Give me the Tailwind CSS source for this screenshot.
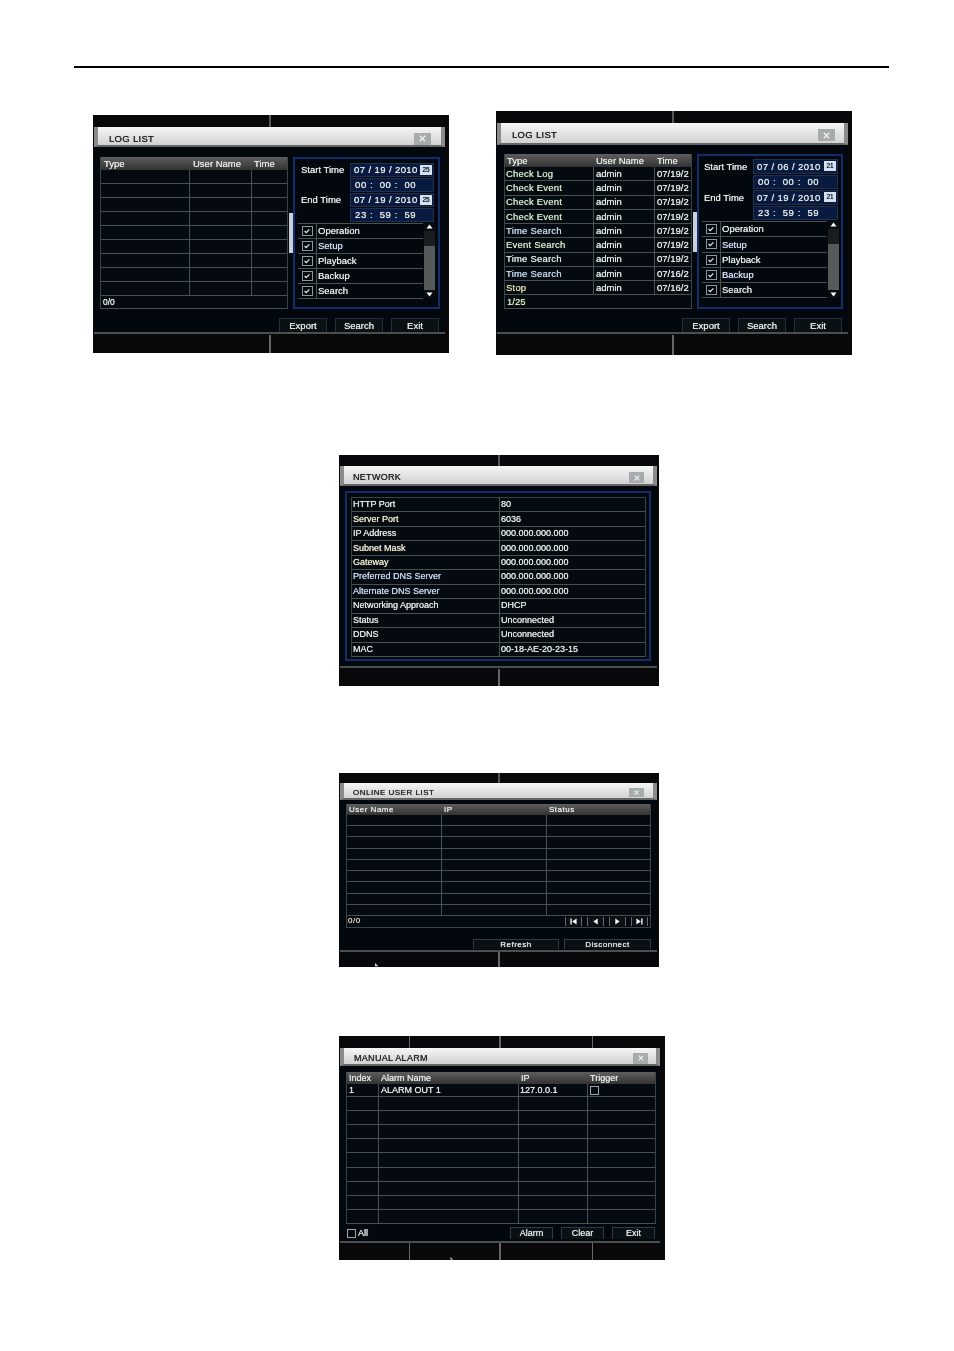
<!DOCTYPE html>
<html>
<head>
<meta charset="utf-8">
<script src="https://cdn.jsdelivr.net/npm/@tailwindcss/browser@4"></script>
</head>
<body class="bg-white">
<div class="w-[954px] h-[1351px] bg-white overflow-hidden font-['Liberation_Sans',Arial,sans-serif] text-[9.5px] leading-none text-[#e4ebe7] [text-shadow:0_0_0.7px_currentColor]">
  <div class="w-[815px] ml-[74px] mt-[66px] h-[2px] bg-black"></div>

  <div class="flex items-start gap-[47px] ml-[93px] mt-[43px] w-[759px] h-[244px]">
    <!-- LOG LIST 1 -->
    <section class="relative w-[356px] h-[238px] mt-[4px] bg-[#08080a] pt-[12px] pl-[1px] blur-[0.35px]">
      <i class="absolute left-[176px] top-0 h-[12px] w-[2px] bg-[#555]"></i>
      <i class="absolute left-[176px] bottom-0 h-[18px] w-[2px] bg-[#666]"></i>
      <div class="w-[351px] h-[207px] border-b-2 border-[#4a5050] bg-[#03080e]">
        <header class="flex items-center justify-between h-[20px] pl-[11px] pr-[10px] pt-[5px] bg-linear-to-b from-[#f6f6f6] to-[#d2d2d2] border-x-4 border-b-2 border-x-[#8a8a8a] border-b-[#666] text-[#222] tracking-[0.3px]">
          <span>LOG LIST</span>
          <span class="flex items-center justify-center w-[17px] h-[12px] bg-[#a6abab]"><svg viewBox="0 0 10 10" class="w-[9px] h-[9px]"><path d="M2 2l6 6M8 2l-6 6" fill="none" stroke="#eee" stroke-width="1.6"/></svg></span>
        </header>
        <div class="flex pl-[6px] pt-[10px]">
          <div class="flex flex-col w-[188px] h-[152px] border-x border-[#3a4643] bg-[#040a10]">
            <div class="flex h-[13px] shrink-0 items-center bg-linear-to-b from-[#5e5e5e] to-[#333]">
              <span class="w-[89px] pl-[3px]">Type</span><span class="w-[62px] pl-[3px]">User Name</span><span class="pl-[2px]">Time</span>
            </div>
            <div class="flex h-[14px] border-b border-[#46524f]"><i class="w-[89px] border-r border-[#46524f]"></i><i class="w-[62px] border-r border-[#46524f]"></i></div>
            <div class="flex h-[14px] border-b border-[#46524f]"><i class="w-[89px] border-r border-[#46524f]"></i><i class="w-[62px] border-r border-[#46524f]"></i></div>
            <div class="flex h-[14px] border-b border-[#46524f]"><i class="w-[89px] border-r border-[#46524f]"></i><i class="w-[62px] border-r border-[#46524f]"></i></div>
            <div class="flex h-[14px] border-b border-[#46524f]"><i class="w-[89px] border-r border-[#46524f]"></i><i class="w-[62px] border-r border-[#46524f]"></i></div>
            <div class="flex h-[14px] border-b border-[#46524f]"><i class="w-[89px] border-r border-[#46524f]"></i><i class="w-[62px] border-r border-[#46524f]"></i></div>
            <div class="flex h-[14px] border-b border-[#46524f]"><i class="w-[89px] border-r border-[#46524f]"></i><i class="w-[62px] border-r border-[#46524f]"></i></div>
            <div class="flex h-[14px] border-b border-[#46524f]"><i class="w-[89px] border-r border-[#46524f]"></i><i class="w-[62px] border-r border-[#46524f]"></i></div>
            <div class="flex h-[14px] border-b border-[#46524f]"><i class="w-[89px] border-r border-[#46524f]"></i><i class="w-[62px] border-r border-[#46524f]"></i></div>
            <div class="flex h-[14px] border-b border-[#46524f]"><i class="w-[89px] border-r border-[#46524f]"></i><i class="w-[62px] border-r border-[#46524f]"></i></div>
            <div class="flex flex-1 items-center pl-[2px] border-b border-[#46524f] text-[8.5px]">0/0</div>
          </div>
          <div class="flex items-center justify-end w-[5px] h-[152px]"><i class="w-[4px] h-[40px] bg-[#c9d2d8]"></i></div>
          <div class="w-[147px] h-[152px] border-2 border-[#142c6a] pl-[3px] pt-[4px] bg-[#03080e]">
            <div class="grid grid-cols-[52px_84px] grid-rows-[14px_14px_14px_14px] gap-y-[1px]">
              <span class="self-center pl-[3px]">Start Time</span>
              <div class="flex items-center justify-between pl-[3px] pr-[1px] border border-[#20314f] bg-[#091a40] tracking-[0.4px] whitespace-nowrap">07 / 19 / 2010<span class="flex items-center justify-center w-[12px] h-[10px] bg-[#d5e3f0] text-[#123] text-[6.5px] tracking-normal">25</span></div>
              <span></span>
              <div class="flex items-center pl-[4px] border border-[#20314f] bg-[#091a40] tracking-[0.6px] whitespace-nowrap">00 :&nbsp; 00 :&nbsp; 00</div>
              <span class="self-center pl-[3px]">End Time</span>
              <div class="flex items-center justify-between pl-[3px] pr-[1px] border border-[#20314f] bg-[#091a40] tracking-[0.4px] whitespace-nowrap">07 / 19 / 2010<span class="flex items-center justify-center w-[12px] h-[10px] bg-[#d5e3f0] text-[#123] text-[6.5px] tracking-normal">25</span></div>
              <span></span>
              <div class="flex items-center pl-[4px] border border-[#20314f] bg-[#091a40] tracking-[0.6px] whitespace-nowrap">23 :&nbsp; 59 :&nbsp; 59</div>
            </div>
            <div class="flex gap-[1px] mt-[1px]">
              <div class="w-[125px] h-[75px] border-t border-[#46524f]">
                <div class="flex items-center h-[15px] border-b border-[#46524f]"><span class="flex items-center justify-center w-[19px] h-full border-r border-[#46524f]"><span class="flex items-center justify-center w-[11px] h-[10px] border border-[#8a9a9a]"><svg viewBox="0 0 10 10" class="w-[8px] h-[8px]"><path d="M2 5l2 2 4-4" fill="none" stroke="#eee" stroke-width="1.500"/></svg></span></span><span class="pl-[1px]">Operation</span></div>
                <div class="flex items-center h-[15px] border-b border-[#46524f]"><span class="flex items-center justify-center w-[19px] h-full border-r border-[#46524f]"><span class="flex items-center justify-center w-[11px] h-[10px] border border-[#8a9a9a]"><svg viewBox="0 0 10 10" class="w-[8px] h-[8px]"><path d="M2 5l2 2 4-4" fill="none" stroke="#eee" stroke-width="1.500"/></svg></span></span><span class="pl-[1px] text-[#d4def5]">Setup</span></div>
                <div class="flex items-center h-[15px] border-b border-[#46524f]"><span class="flex items-center justify-center w-[19px] h-full border-r border-[#46524f]"><span class="flex items-center justify-center w-[11px] h-[10px] border border-[#8a9a9a]"><svg viewBox="0 0 10 10" class="w-[8px] h-[8px]"><path d="M2 5l2 2 4-4" fill="none" stroke="#eee" stroke-width="1.500"/></svg></span></span><span class="pl-[1px]">Playback</span></div>
                <div class="flex items-center h-[15px] border-b border-[#46524f]"><span class="flex items-center justify-center w-[19px] h-full border-r border-[#46524f]"><span class="flex items-center justify-center w-[11px] h-[10px] border border-[#8a9a9a]"><svg viewBox="0 0 10 10" class="w-[8px] h-[8px]"><path d="M2 5l2 2 4-4" fill="none" stroke="#eee" stroke-width="1.500"/></svg></span></span><span class="pl-[1px]">Backup</span></div>
                <div class="flex items-center h-[15px] border-b border-[#46524f]"><span class="flex items-center justify-center w-[19px] h-full border-r border-[#46524f]"><span class="flex items-center justify-center w-[11px] h-[10px] border border-[#8a9a9a]"><svg viewBox="0 0 10 10" class="w-[8px] h-[8px]"><path d="M2 5l2 2 4-4" fill="none" stroke="#eee" stroke-width="1.500"/></svg></span></span><span class="pl-[1px]">Search</span></div>
              </div>
              <div class="flex flex-col w-[11px] h-[75px] bg-[#555a5a]">
                <svg viewBox="0 0 11 8" class="w-[11px] h-[8px] bg-[#0a0d10]"><path d="M5.500 1.500l3 4h-6z" fill="#fff"/></svg>
                <i class="h-[15px] bg-[#1a1d1f]"></i>
                <i class="flex-1"></i>
                <svg viewBox="0 0 11 8" class="w-[11px] h-[8px] bg-[#0a0d10]"><path d="M5.500 6.500l3-4h-6z" fill="#fff"/></svg>
              </div>
            </div>
          </div>
        </div>
        <div class="flex justify-end gap-[8px] mt-[9px] pr-[6px]">
          <span class="flex items-center justify-center w-[48px] h-[14px] border-t border-x border-[#243038] bg-[#0b1014]">Export</span>
          <span class="flex items-center justify-center w-[48px] h-[14px] border-t border-x border-[#243038] bg-[#0b1014]">Search</span>
          <span class="flex items-center justify-center w-[48px] h-[14px] border-t border-x border-[#243038] bg-[#0b1014]">Exit</span>
        </div>
      </div>
    </section>

    <!-- LOG LIST 2 -->
    <section class="relative w-[356px] h-[244px] bg-[#08080a] pt-[12px] pl-[1px] blur-[0.35px]">
      <i class="absolute left-[176px] top-0 h-[12px] w-[2px] bg-[#555]"></i>
      <i class="absolute left-[176px] bottom-0 h-[20px] w-[2px] bg-[#666]"></i>
      <div class="w-[351px] h-[211px] border-b-2 border-[#4a5050] bg-[#03080e]">
        <header class="flex items-center justify-between h-[22px] pl-[11px] pr-[9px] pt-[4px] bg-linear-to-b from-[#f6f6f6] to-[#d2d2d2] border-x-4 border-b-2 border-x-[#8a8a8a] border-b-[#666] text-[#222] tracking-[0.3px]">
          <span>LOG LIST</span>
          <span class="flex items-center justify-center w-[17px] h-[12px] bg-[#a6abab]"><svg viewBox="0 0 10 10" class="w-[9px] h-[9px]"><path d="M2 2l6 6M8 2l-6 6" fill="none" stroke="#eee" stroke-width="1.6"/></svg></span>
        </header>
        <div class="flex pl-[7px] pt-[9px]">
          <div class="flex flex-col w-[188px] h-[155px] border-x border-[#3a4643] bg-[#040a10]">
            <div class="flex h-[13px] shrink-0 items-center bg-linear-to-b from-[#5e5e5e] to-[#333]">
              <span class="w-[89px] pl-[2px]">Type</span><span class="w-[61px] pl-[2px]">User Name</span><span class="pl-[2px]">Time</span>
            </div>
            <div class="flex h-[14.250px] items-center border-b border-[#46524f]"><span class="flex items-center w-[89px] h-full pl-[1px] border-r border-[#46524f] text-[#cfe6c8] tracking-[0.2px]">Check Log</span><span class="flex items-center w-[61px] h-full pl-[2px] border-r border-[#46524f]">admin</span><span class="pl-[2px]">07/19/2</span></div>
            <div class="flex h-[14.250px] items-center border-b border-[#46524f]"><span class="flex items-center w-[89px] h-full pl-[1px] border-r border-[#46524f] text-[#cfe6c8] tracking-[0.2px]">Check Event</span><span class="flex items-center w-[61px] h-full pl-[2px] border-r border-[#46524f]">admin</span><span class="pl-[2px]">07/19/2</span></div>
            <div class="flex h-[14.250px] items-center border-b border-[#46524f]"><span class="flex items-center w-[89px] h-full pl-[1px] border-r border-[#46524f] text-[#cfe6c8] tracking-[0.2px]">Check Event</span><span class="flex items-center w-[61px] h-full pl-[2px] border-r border-[#46524f]">admin</span><span class="pl-[2px]">07/19/2</span></div>
            <div class="flex h-[14.250px] items-center border-b border-[#46524f]"><span class="flex items-center w-[89px] h-full pl-[1px] border-r border-[#46524f] text-[#cfe6c8] tracking-[0.2px]">Check Event</span><span class="flex items-center w-[61px] h-full pl-[2px] border-r border-[#46524f]">admin</span><span class="pl-[2px]">07/19/2</span></div>
            <div class="flex h-[14.250px] items-center border-b border-[#46524f]"><span class="flex items-center w-[89px] h-full pl-[1px] border-r border-[#46524f] text-[#c4d8ea] tracking-[0.2px]">Time Search</span><span class="flex items-center w-[61px] h-full pl-[2px] border-r border-[#46524f]">admin</span><span class="pl-[2px]">07/19/2</span></div>
            <div class="flex h-[14.250px] items-center border-b border-[#46524f]"><span class="flex items-center w-[89px] h-full pl-[1px] border-r border-[#46524f] text-[#cfe6c8] tracking-[0.2px]">Event Search</span><span class="flex items-center w-[61px] h-full pl-[2px] border-r border-[#46524f]">admin</span><span class="pl-[2px]">07/19/2</span></div>
            <div class="flex h-[14.250px] items-center border-b border-[#46524f]"><span class="flex items-center w-[89px] h-full pl-[1px] border-r border-[#46524f] text-[#d8eadf] tracking-[0.2px]">Time Search</span><span class="flex items-center w-[61px] h-full pl-[2px] border-r border-[#46524f]">admin</span><span class="pl-[2px]">07/19/2</span></div>
            <div class="flex h-[14.250px] items-center border-b border-[#46524f]"><span class="flex items-center w-[89px] h-full pl-[1px] border-r border-[#46524f] text-[#c4d8ea] tracking-[0.2px]">Time Search</span><span class="flex items-center w-[61px] h-full pl-[2px] border-r border-[#46524f]">admin</span><span class="pl-[2px]">07/16/2</span></div>
            <div class="flex h-[14.250px] items-center border-b border-[#46524f]"><span class="flex items-center w-[89px] h-full pl-[1px] border-r border-[#46524f] text-[#e2dcae] tracking-[0.2px]">Stop</span><span class="flex items-center w-[61px] h-full pl-[2px] border-r border-[#46524f]">admin</span><span class="pl-[2px]">07/16/2</span></div>
            <div class="flex flex-1 items-center pl-[2px] border-b border-[#46524f] text-[#d8e8c0]">1/25</div>
          </div>
          <div class="flex items-center justify-end w-[5px] h-[155px]"><i class="w-[4px] h-[40px] bg-[#c9d2d8]"></i></div>
          <div class="w-[146px] h-[155px] border-2 border-[#142c6a] pl-[3px] pt-[3px] bg-[#03080e]">
            <div class="grid grid-cols-[51px_85px] grid-rows-[14.500px_14.500px_14.500px_14.500px] gap-y-[1px]">
              <span class="self-center pl-[2px]">Start Time</span>
              <div class="flex items-center justify-between pl-[3px] pr-[1px] border border-[#20314f] bg-[#091a40] tracking-[0.4px] whitespace-nowrap">07 / 06 / 2010<span class="flex items-center justify-center w-[12px] h-[10px] bg-[#d5e3f0] text-[#123] text-[6.5px] tracking-normal">21</span></div>
              <span></span>
              <div class="flex items-center pl-[4px] border border-[#20314f] bg-[#091a40] tracking-[0.6px] whitespace-nowrap">00 :&nbsp; 00 :&nbsp; 00</div>
              <span class="self-center pl-[2px]">End Time</span>
              <div class="flex items-center justify-between pl-[3px] pr-[1px] border border-[#20314f] bg-[#091a40] tracking-[0.4px] whitespace-nowrap">07 / 19 / 2010<span class="flex items-center justify-center w-[12px] h-[10px] bg-[#d5e3f0] text-[#123] text-[6.5px] tracking-normal">21</span></div>
              <span></span>
              <div class="flex items-center pl-[4px] border border-[#20314f] bg-[#091a40] tracking-[0.6px] whitespace-nowrap">23 :&nbsp; 59 :&nbsp; 59</div>
            </div>
            <div class="flex gap-[1px] mt-[1px]">
              <div class="w-[125px] h-[77px] border-t border-[#46524f]">
                <div class="flex items-center h-[15.250px] border-b border-[#46524f]"><span class="flex items-center justify-center w-[19px] h-full border-r border-[#46524f]"><span class="flex items-center justify-center w-[11px] h-[10px] border border-[#8a9a9a]"><svg viewBox="0 0 10 10" class="w-[8px] h-[8px]"><path d="M2 5l2 2 4-4" fill="none" stroke="#eee" stroke-width="1.500"/></svg></span></span><span class="pl-[1px]">Operation</span></div>
                <div class="flex items-center h-[15.250px] border-b border-[#46524f]"><span class="flex items-center justify-center w-[19px] h-full border-r border-[#46524f]"><span class="flex items-center justify-center w-[11px] h-[10px] border border-[#8a9a9a]"><svg viewBox="0 0 10 10" class="w-[8px] h-[8px]"><path d="M2 5l2 2 4-4" fill="none" stroke="#eee" stroke-width="1.500"/></svg></span></span><span class="pl-[1px] text-[#d4def5]">Setup</span></div>
                <div class="flex items-center h-[15.250px] border-b border-[#46524f]"><span class="flex items-center justify-center w-[19px] h-full border-r border-[#46524f]"><span class="flex items-center justify-center w-[11px] h-[10px] border border-[#8a9a9a]"><svg viewBox="0 0 10 10" class="w-[8px] h-[8px]"><path d="M2 5l2 2 4-4" fill="none" stroke="#eee" stroke-width="1.500"/></svg></span></span><span class="pl-[1px]">Playback</span></div>
                <div class="flex items-center h-[15.250px] border-b border-[#46524f]"><span class="flex items-center justify-center w-[19px] h-full border-r border-[#46524f]"><span class="flex items-center justify-center w-[11px] h-[10px] border border-[#8a9a9a]"><svg viewBox="0 0 10 10" class="w-[8px] h-[8px]"><path d="M2 5l2 2 4-4" fill="none" stroke="#eee" stroke-width="1.500"/></svg></span></span><span class="pl-[1px] text-[#d4def5]">Backup</span></div>
                <div class="flex items-center h-[15.250px] border-b border-[#46524f]"><span class="flex items-center justify-center w-[19px] h-full border-r border-[#46524f]"><span class="flex items-center justify-center w-[11px] h-[10px] border border-[#8a9a9a]"><svg viewBox="0 0 10 10" class="w-[8px] h-[8px]"><path d="M2 5l2 2 4-4" fill="none" stroke="#eee" stroke-width="1.500"/></svg></span></span><span class="pl-[1px]">Search</span></div>
              </div>
              <div class="flex flex-col w-[11px] h-[77px] bg-[#555a5a]">
                <svg viewBox="0 0 11 8" class="w-[11px] h-[8px] bg-[#0a0d10]"><path d="M5.500 1.500l3 4h-6z" fill="#fff"/></svg>
                <i class="h-[15px] bg-[#1a1d1f]"></i>
                <i class="flex-1"></i>
                <svg viewBox="0 0 11 8" class="w-[11px] h-[8px] bg-[#0a0d10]"><path d="M5.500 6.500l3-4h-6z" fill="#fff"/></svg>
              </div>
            </div>
          </div>
        </div>
        <div class="flex justify-end gap-[8px] mt-[9px] pr-[6px]">
          <span class="flex items-center justify-center w-[48px] h-[14px] border-t border-x border-[#243038] bg-[#0b1014]">Export</span>
          <span class="flex items-center justify-center w-[48px] h-[14px] border-t border-x border-[#243038] bg-[#0b1014]">Search</span>
          <span class="flex items-center justify-center w-[48px] h-[14px] border-t border-x border-[#243038] bg-[#0b1014]">Exit</span>
        </div>
      </div>
    </section>
  </div>

  <!-- NETWORK -->
  <section class="relative w-[320px] h-[231px] ml-[339px] mt-[100px] bg-[#08080a] pt-[11px] pl-[1px] text-[9px] blur-[0.35px]">
    <i class="absolute left-[159px] top-0 h-[11px] w-[2px] bg-[#555]"></i>
    <i class="absolute left-[159px] bottom-0 h-[17px] w-[2px] bg-[#666]"></i>
    <div class="w-[317px] h-[202px] border-b-2 border-[#4a5050] bg-[#03080e]">
      <header class="flex items-center justify-between h-[20px] pl-[9px] pr-[9px] pt-[5px] bg-linear-to-b from-[#f6f6f6] to-[#d2d2d2] border-x-4 border-b-2 border-x-[#8a8a8a] border-b-[#666] text-[#222] text-[9px] tracking-[0.3px]">
        <span>NETWORK</span>
        <span class="flex items-center justify-center w-[15px] h-[11px] bg-[#a6abab]"><svg viewBox="0 0 10 10" class="w-[8px] h-[8px]"><path d="M2 2l6 6M8 2l-6 6" fill="none" stroke="#eee" stroke-width="1.6"/></svg></span>
      </header>
      <div class="w-[306px] h-[170px] mt-[5px] ml-[5px] border-2 border-[#142c6a] pl-[4px] pt-[4px]">
        <div class="flex flex-col w-[295px] h-[160px] border-t border-x border-[#3a4643] bg-[#040a10]">
          <div class="flex flex-1 items-center border-b border-[#46524f]"><span class="flex items-center w-[148px] h-full pl-[1px] border-r border-[#46524f]">HTTP Port</span><span class="pl-[1px]">80</span></div>
          <div class="flex flex-1 items-center border-b border-[#46524f]"><span class="flex items-center w-[148px] h-full pl-[1px] border-r border-[#46524f] text-[#f0ecd0]">Server Port</span><span class="pl-[1px]">6036</span></div>
          <div class="flex flex-1 items-center border-b border-[#46524f]"><span class="flex items-center w-[148px] h-full pl-[1px] border-r border-[#46524f]">IP Address</span><span class="pl-[1px]">000.000.000.000</span></div>
          <div class="flex flex-1 items-center border-b border-[#46524f]"><span class="flex items-center w-[148px] h-full pl-[1px] border-r border-[#46524f] text-[#f0ecd0]">Subnet Mask</span><span class="pl-[1px]">000.000.000.000</span></div>
          <div class="flex flex-1 items-center border-b border-[#46524f]"><span class="flex items-center w-[148px] h-full pl-[1px] border-r border-[#46524f] text-[#f0ecd0]">Gateway</span><span class="pl-[1px]">000.000.000.000</span></div>
          <div class="flex flex-1 items-center border-b border-[#46524f]"><span class="flex items-center w-[148px] h-full pl-[1px] border-r border-[#46524f] text-[#c8daf0]">Preferred DNS Server</span><span class="pl-[1px]">000.000.000.000</span></div>
          <div class="flex flex-1 items-center border-b border-[#46524f]"><span class="flex items-center w-[148px] h-full pl-[1px] border-r border-[#46524f] text-[#c8daf0]">Alternate DNS Server</span><span class="pl-[1px]">000.000.000.000</span></div>
          <div class="flex flex-1 items-center border-b border-[#46524f]"><span class="flex items-center w-[148px] h-full pl-[1px] border-r border-[#46524f]">Networking Approach</span><span class="pl-[1px]">DHCP</span></div>
          <div class="flex flex-1 items-center border-b border-[#46524f]"><span class="flex items-center w-[148px] h-full pl-[1px] border-r border-[#46524f]">Status</span><span class="pl-[1px]">Unconnected</span></div>
          <div class="flex flex-1 items-center border-b border-[#46524f]"><span class="flex items-center w-[148px] h-full pl-[1px] border-r border-[#46524f]">DDNS</span><span class="pl-[1px]">Unconnected</span></div>
          <div class="flex flex-1 items-center border-b border-[#46524f]"><span class="flex items-center w-[148px] h-full pl-[1px] border-r border-[#46524f]">MAC</span><span class="pl-[1px]">00-18-AE-20-23-15</span></div>
        </div>
      </div>
    </div>
  </section>

  <!-- ONLINE USER LIST -->
  <section class="relative w-[320px] h-[194px] ml-[339px] mt-[87px] bg-[#08080a] pt-[10px] pl-[1px] text-[8px] tracking-[0.5px] blur-[0.35px]">
    <i class="absolute left-[159px] top-0 h-[10px] w-[2px] bg-[#555]"></i>
    <i class="absolute left-[159px] bottom-0 h-[15px] w-[2px] bg-[#666]"></i>
    <svg viewBox="0 0 6 6" class="absolute left-[35px] bottom-0 w-[6px] h-[4px]"><path d="M0 0l5 5H0z" fill="#ddd"/></svg>
    <div class="w-[317px] h-[169px] border-b-2 border-[#4a5050] bg-[#03080e]">
      <header class="flex items-center justify-between h-[17px] pl-[9px] pr-[9px] pt-[4px] bg-linear-to-b from-[#f6f6f6] to-[#d2d2d2] border-x-4 border-b-2 border-x-[#8a8a8a] border-b-[#666] text-[#222]">
        <span>ONLINE USER LIST</span>
        <span class="flex items-center justify-center w-[15px] h-[9px] bg-[#a6abab]"><svg viewBox="0 0 10 10" class="w-[7px] h-[7px]"><path d="M2 2l6 6M8 2l-6 6" fill="none" stroke="#eee" stroke-width="1.6"/></svg></span>
      </header>
      <div class="flex flex-col w-[305px] h-[124px] mt-[4px] ml-[6px] border-x border-b border-[#3a4643] bg-[#040a10]">
        <div class="flex h-[11px] shrink-0 items-center bg-linear-to-b from-[#5e5e5e] to-[#333]"><span class="w-[95px] pl-[2px]">User Name</span><span class="w-[105px] pl-[2px]">IP</span><span class="pl-[2px]">Status</span></div>
        <div class="flex flex-1 border-b border-[#46524f]"><i class="w-[95px] border-r border-[#46524f]"></i><i class="w-[105px] border-r border-[#46524f]"></i></div>
        <div class="flex flex-1 border-b border-[#46524f]"><i class="w-[95px] border-r border-[#46524f]"></i><i class="w-[105px] border-r border-[#46524f]"></i></div>
        <div class="flex flex-1 border-b border-[#46524f]"><i class="w-[95px] border-r border-[#46524f]"></i><i class="w-[105px] border-r border-[#46524f]"></i></div>
        <div class="flex flex-1 border-b border-[#46524f]"><i class="w-[95px] border-r border-[#46524f]"></i><i class="w-[105px] border-r border-[#46524f]"></i></div>
        <div class="flex flex-1 border-b border-[#46524f]"><i class="w-[95px] border-r border-[#46524f]"></i><i class="w-[105px] border-r border-[#46524f]"></i></div>
        <div class="flex flex-1 border-b border-[#46524f]"><i class="w-[95px] border-r border-[#46524f]"></i><i class="w-[105px] border-r border-[#46524f]"></i></div>
        <div class="flex flex-1 border-b border-[#46524f]"><i class="w-[95px] border-r border-[#46524f]"></i><i class="w-[105px] border-r border-[#46524f]"></i></div>
        <div class="flex flex-1 border-b border-[#46524f]"><i class="w-[95px] border-r border-[#46524f]"></i><i class="w-[105px] border-r border-[#46524f]"></i></div>
        <div class="flex flex-1 border-b border-[#46524f]"><i class="w-[95px] border-r border-[#46524f]"></i><i class="w-[105px] border-r border-[#46524f]"></i></div>
        <div class="flex h-[11px] shrink-0 items-center justify-between pl-[1px] pr-[2px]">
          <span class="text-[#e6d8c8]">0/0</span>
          <div class="flex gap-[5px]">
            <svg viewBox="0 0 17 9" class="w-[17px] h-[9px] bg-[#0c1116] border-x border-[#667]"><path d="M5 1v7h1.500V1zM12 1v7L7 4.500z" fill="#fff"/></svg>
            <svg viewBox="0 0 17 9" class="w-[17px] h-[9px] bg-[#0c1116] border-x border-[#667]"><path d="M11 1v7L6 4.500z" fill="#fff"/></svg>
            <svg viewBox="0 0 17 9" class="w-[17px] h-[9px] bg-[#0c1116] border-x border-[#667]"><path d="M6 1v7l5-3.500z" fill="#fff"/></svg>
            <svg viewBox="0 0 17 9" class="w-[17px] h-[9px] bg-[#0c1116] border-x border-[#667]"><path d="M5 1v7l5-3.500zM10.500 1v7H12V1z" fill="#fff"/></svg>
          </div>
        </div>
      </div>
      <div class="flex justify-end gap-[5px] mt-[11px] pr-[6px]">
        <span class="flex items-center justify-center w-[86px] h-[10px] border-t border-x border-[#2b3d4d] bg-[#0b1014]">Refresh</span>
        <span class="flex items-center justify-center w-[87px] h-[10px] border-t border-x border-[#2b3d4d] bg-[#0b1014]">Disconnect</span>
      </div>
    </div>
  </section>

  <!-- MANUAL ALARM -->
  <section class="relative w-[326px] h-[224px] ml-[339px] mt-[69px] bg-[#08080a] pt-[12px] pl-[1px] text-[9px] blur-[0.35px]">
    <i class="absolute left-[70px] top-0 h-[12px] w-[1px] bg-[#666]"></i>
    <i class="absolute left-[160px] top-0 h-[12px] w-[2px] bg-[#666]"></i>
    <i class="absolute left-[253px] top-0 h-[12px] w-[1px] bg-[#666]"></i>
    <i class="absolute left-[70px] bottom-0 h-[17px] w-[1px] bg-[#666]"></i>
    <i class="absolute left-[160px] bottom-0 h-[17px] w-[2px] bg-[#666]"></i>
    <i class="absolute left-[253px] bottom-0 h-[17px] w-[1px] bg-[#666]"></i>
    <svg viewBox="0 0 6 6" class="absolute left-[110px] bottom-0 w-[6px] h-[3px]"><path d="M0 0l5 5H0z" fill="#ddd"/></svg>
    <div class="w-[320px] h-[195px] border-b-2 border-[#4a5050] bg-[#03080e]">
      <header class="flex items-center justify-between h-[18px] pl-[10px] pr-[8px] pt-[4px] bg-linear-to-b from-[#f6f6f6] to-[#d2d2d2] border-x-4 border-b-2 border-x-[#8a8a8a] border-b-[#666] text-[#222] tracking-[0.3px]">
        <span>MANUAL ALARM</span>
        <span class="flex items-center justify-center w-[15px] h-[11px] bg-[#a6abab]"><svg viewBox="0 0 10 10" class="w-[8px] h-[8px]"><path d="M2 2l6 6M8 2l-6 6" fill="none" stroke="#eee" stroke-width="1.6"/></svg></span>
      </header>
      <div class="flex flex-col w-[310px] h-[152px] mt-[6px] ml-[6px] border-x border-[#3a4643] bg-[#040a10]">
        <div class="flex h-[12px] shrink-0 items-center bg-linear-to-b from-[#5e5e5e] to-[#333]"><span class="w-[32px] pl-[2px]">Index</span><span class="w-[140px] pl-[2px]">Alarm Name</span><span class="w-[69px] pl-[2px]">IP</span><span class="pl-[2px]">Trigger</span></div>
        <div class="flex h-[13px] items-center border-b border-[#46524f]"><span class="flex items-center w-[32px] h-full pl-[2px] border-r border-[#46524f]">1</span><span class="flex items-center w-[140px] h-full pl-[2px] border-r border-[#46524f]">ALARM OUT 1</span><span class="flex items-center w-[69px] h-full pl-[1px] border-r border-[#46524f]">127.0.0.1</span><span class="ml-[2px] w-[9px] h-[9px] border border-[#9aa]"></span></div>
        <div class="flex flex-1 border-b border-[#46524f]"><i class="w-[32px] border-r border-[#46524f]"></i><i class="w-[140px] border-r border-[#46524f]"></i><i class="w-[69px] border-r border-[#46524f]"></i></div>
        <div class="flex flex-1 border-b border-[#46524f]"><i class="w-[32px] border-r border-[#46524f]"></i><i class="w-[140px] border-r border-[#46524f]"></i><i class="w-[69px] border-r border-[#46524f]"></i></div>
        <div class="flex flex-1 border-b border-[#46524f]"><i class="w-[32px] border-r border-[#46524f]"></i><i class="w-[140px] border-r border-[#46524f]"></i><i class="w-[69px] border-r border-[#46524f]"></i></div>
        <div class="flex flex-1 border-b border-[#46524f]"><i class="w-[32px] border-r border-[#46524f]"></i><i class="w-[140px] border-r border-[#46524f]"></i><i class="w-[69px] border-r border-[#46524f]"></i></div>
        <div class="flex flex-1 border-b border-[#46524f]"><i class="w-[32px] border-r border-[#46524f]"></i><i class="w-[140px] border-r border-[#46524f]"></i><i class="w-[69px] border-r border-[#46524f]"></i></div>
        <div class="flex flex-1 border-b border-[#46524f]"><i class="w-[32px] border-r border-[#46524f]"></i><i class="w-[140px] border-r border-[#46524f]"></i><i class="w-[69px] border-r border-[#46524f]"></i></div>
        <div class="flex flex-1 border-b border-[#46524f]"><i class="w-[32px] border-r border-[#46524f]"></i><i class="w-[140px] border-r border-[#46524f]"></i><i class="w-[69px] border-r border-[#46524f]"></i></div>
        <div class="flex flex-1 border-b border-[#46524f]"><i class="w-[32px] border-r border-[#46524f]"></i><i class="w-[140px] border-r border-[#46524f]"></i><i class="w-[69px] border-r border-[#46524f]"></i></div>
        <div class="flex flex-1 border-b border-[#46524f]"><i class="w-[32px] border-r border-[#46524f]"></i><i class="w-[140px] border-r border-[#46524f]"></i><i class="w-[69px] border-r border-[#46524f]"></i></div>
      </div>
      <div class="flex items-center h-[12px] mt-[3px] pl-[7px] pr-[5px]">
        <span class="w-[9px] h-[9px] border border-[#9aa]"></span>
        <span class="ml-[2px]">All</span>
        <div class="flex gap-[8px] ml-auto">
          <span class="flex items-center justify-center w-[43px] h-[12px] border-t border-x border-[#2b3d4d] bg-[#0b1014]">Alarm</span>
          <span class="flex items-center justify-center w-[43px] h-[12px] border-t border-x border-[#2b3d4d] bg-[#0b1014]">Clear</span>
          <span class="flex items-center justify-center w-[43px] h-[12px] border-t border-x border-[#2b3d4d] bg-[#0b1014]">Exit</span>
        </div>
      </div>
    </div>
  </section>
</div>
</body>
</html>
